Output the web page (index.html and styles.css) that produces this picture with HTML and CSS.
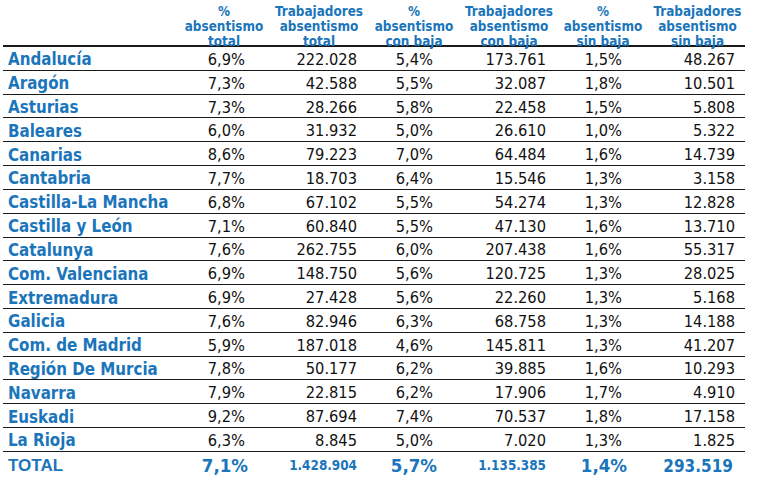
FILE: index.html
```html
<!DOCTYPE html>
<html lang="es">
<head>
<meta charset="utf-8">
<title>Absentismo por comunidad</title>
<link rel="stylesheet" href="styles.css">
</head>
<body>
<div class="table">
  <div class="row head">
    <div class="cell"></div>
    <div class="cell h c1">%<br>absentismo<br>total</div>
    <div class="cell h c2">Trabajadores<br>absentismo<br>total</div>
    <div class="cell h c3">%<br>absentismo<br>con baja</div>
    <div class="cell h c4">Trabajadores<br>absentismo<br>con baja</div>
    <div class="cell h c5">%<br>absentismo<br>sin baja</div>
    <div class="cell h c6">Trabajadores<br>absentismo<br>sin baja</div>
  </div>
  <div class="row"><div class="cell lbl">Andalucía</div><div class="cell n c1">6,9%</div><div class="cell n c2">222.028</div><div class="cell n c3">5,4%</div><div class="cell n c4">173.761</div><div class="cell n c5">1,5%</div><div class="cell n c6">48.267</div></div>
  <div class="row"><div class="cell lbl">Aragón</div><div class="cell n c1">7,3%</div><div class="cell n c2">42.588</div><div class="cell n c3">5,5%</div><div class="cell n c4">32.087</div><div class="cell n c5">1,8%</div><div class="cell n c6">10.501</div></div>
  <div class="row"><div class="cell lbl">Asturias</div><div class="cell n c1">7,3%</div><div class="cell n c2">28.266</div><div class="cell n c3">5,8%</div><div class="cell n c4">22.458</div><div class="cell n c5">1,5%</div><div class="cell n c6">5.808</div></div>
  <div class="row"><div class="cell lbl">Baleares</div><div class="cell n c1">6,0%</div><div class="cell n c2">31.932</div><div class="cell n c3">5,0%</div><div class="cell n c4">26.610</div><div class="cell n c5">1,0%</div><div class="cell n c6">5.322</div></div>
  <div class="row"><div class="cell lbl">Canarias</div><div class="cell n c1">8,6%</div><div class="cell n c2">79.223</div><div class="cell n c3">7,0%</div><div class="cell n c4">64.484</div><div class="cell n c5">1,6%</div><div class="cell n c6">14.739</div></div>
  <div class="row"><div class="cell lbl">Cantabria</div><div class="cell n c1">7,7%</div><div class="cell n c2">18.703</div><div class="cell n c3">6,4%</div><div class="cell n c4">15.546</div><div class="cell n c5">1,3%</div><div class="cell n c6">3.158</div></div>
  <div class="row"><div class="cell lbl">Castilla-La Mancha</div><div class="cell n c1">6,8%</div><div class="cell n c2">67.102</div><div class="cell n c3">5,5%</div><div class="cell n c4">54.274</div><div class="cell n c5">1,3%</div><div class="cell n c6">12.828</div></div>
  <div class="row"><div class="cell lbl">Castilla y León</div><div class="cell n c1">7,1%</div><div class="cell n c2">60.840</div><div class="cell n c3">5,5%</div><div class="cell n c4">47.130</div><div class="cell n c5">1,6%</div><div class="cell n c6">13.710</div></div>
  <div class="row"><div class="cell lbl">Catalunya</div><div class="cell n c1">7,6%</div><div class="cell n c2">262.755</div><div class="cell n c3">6,0%</div><div class="cell n c4">207.438</div><div class="cell n c5">1,6%</div><div class="cell n c6">55.317</div></div>
  <div class="row"><div class="cell lbl">Com. Valenciana</div><div class="cell n c1">6,9%</div><div class="cell n c2">148.750</div><div class="cell n c3">5,6%</div><div class="cell n c4">120.725</div><div class="cell n c5">1,3%</div><div class="cell n c6">28.025</div></div>
  <div class="row"><div class="cell lbl">Extremadura</div><div class="cell n c1">6,9%</div><div class="cell n c2">27.428</div><div class="cell n c3">5,6%</div><div class="cell n c4">22.260</div><div class="cell n c5">1,3%</div><div class="cell n c6">5.168</div></div>
  <div class="row"><div class="cell lbl">Galicia</div><div class="cell n c1">7,6%</div><div class="cell n c2">82.946</div><div class="cell n c3">6,3%</div><div class="cell n c4">68.758</div><div class="cell n c5">1,3%</div><div class="cell n c6">14.188</div></div>
  <div class="row"><div class="cell lbl">Com. de Madrid</div><div class="cell n c1">5,9%</div><div class="cell n c2">187.018</div><div class="cell n c3">4,6%</div><div class="cell n c4">145.811</div><div class="cell n c5">1,3%</div><div class="cell n c6">41.207</div></div>
  <div class="row"><div class="cell lbl">Región De Murcia</div><div class="cell n c1">7,8%</div><div class="cell n c2">50.177</div><div class="cell n c3">6,2%</div><div class="cell n c4">39.885</div><div class="cell n c5">1,6%</div><div class="cell n c6">10.293</div></div>
  <div class="row"><div class="cell lbl">Navarra</div><div class="cell n c1">7,9%</div><div class="cell n c2">22.815</div><div class="cell n c3">6,2%</div><div class="cell n c4">17.906</div><div class="cell n c5">1,7%</div><div class="cell n c6">4.910</div></div>
  <div class="row"><div class="cell lbl">Euskadi</div><div class="cell n c1">9,2%</div><div class="cell n c2">87.694</div><div class="cell n c3">7,4%</div><div class="cell n c4">70.537</div><div class="cell n c5">1,8%</div><div class="cell n c6">17.158</div></div>
  <div class="row"><div class="cell lbl">La Rioja</div><div class="cell n c1">6,3%</div><div class="cell n c2">8.845</div><div class="cell n c3">5,0%</div><div class="cell n c4">7.020</div><div class="cell n c5">1,3%</div><div class="cell n c6">1.825</div></div>
  <div class="row total"><div class="cell lbl tl">TOTAL</div><div class="cell n c1 tp">7,1%</div><div class="cell n c2 ts">1.428.904</div><div class="cell n c3 tp">5,7%</div><div class="cell n c4 ts">1.135.385</div><div class="cell n c5 tp">1,4%</div><div class="cell n c6 tb">293.519</div></div>
</div>
</body>
</html>
```
FILE: styles.css
```css
html, body {
  margin: 0;
  padding: 0;
  background: #ffffff;
}
body {
  padding-left: 3px;
  font-family: "DejaVu Sans", Verdana, sans-serif;
  font-stretch: condensed;
  color: #111;
}
.table {
  width: 742px;
}
.row {
  display: grid;
  grid-template-columns: 177px 88px 102px 88px 102px 86px 99px;
  height: 23.82px;
  box-sizing: border-box;
  border-bottom: 1px solid #1a1a1a;
  align-items: center;
  padding-top: 2px;
}
.row.head {
  height: 47px;
  padding-top: 0;
  border-bottom: 2px solid #1a1a1a;
  align-items: end;
}
.row.total {
  border-bottom: none;
  height: 28px;
  padding-top: 0;
}
.cell {
  white-space: nowrap;
}
.h {
  color: #1b75bb;
  font-weight: bold;
  font-size: 13.4px;
  line-height: 15px;
  text-align: center;
  margin-bottom: -3.5px;
}
.lbl {
  color: #1b75bb;
  font-weight: bold;
  font-size: 16.8px;
  padding-left: 5px;
}
.n {
  text-align: right;
  font-size: 16.3px;
}
.c1 { padding-right: 23px; }
.c2 { padding-right: 13px; }
.c3 { padding-right: 25px; }
.c4 { padding-right: 14px; }
.c5 { padding-right: 24px; }
.c6 { padding-right: 10px; }
.h.c1, .h.c2, .h.c3, .h.c4, .h.c5, .h.c6 { padding-right: 0; }
.h.c6 { padding-left: 4px; }
.tl {
  font-family: "Liberation Sans", Arial, sans-serif;
  font-stretch: normal;
  font-size: 17px;
}
.tp, .ts, .tb {
  color: #1b75bb;
  font-weight: bold;
}
.tp { font-size: 18.5px; }
.tp.c1 { padding-right: 20px; }
.tp.c3 { padding-right: 21px; }
.tp.c5 { padding-right: 19px; }
.ts { font-size: 13.4px; }
.tb { font-size: 17px; padding-right: 12px; }
```
